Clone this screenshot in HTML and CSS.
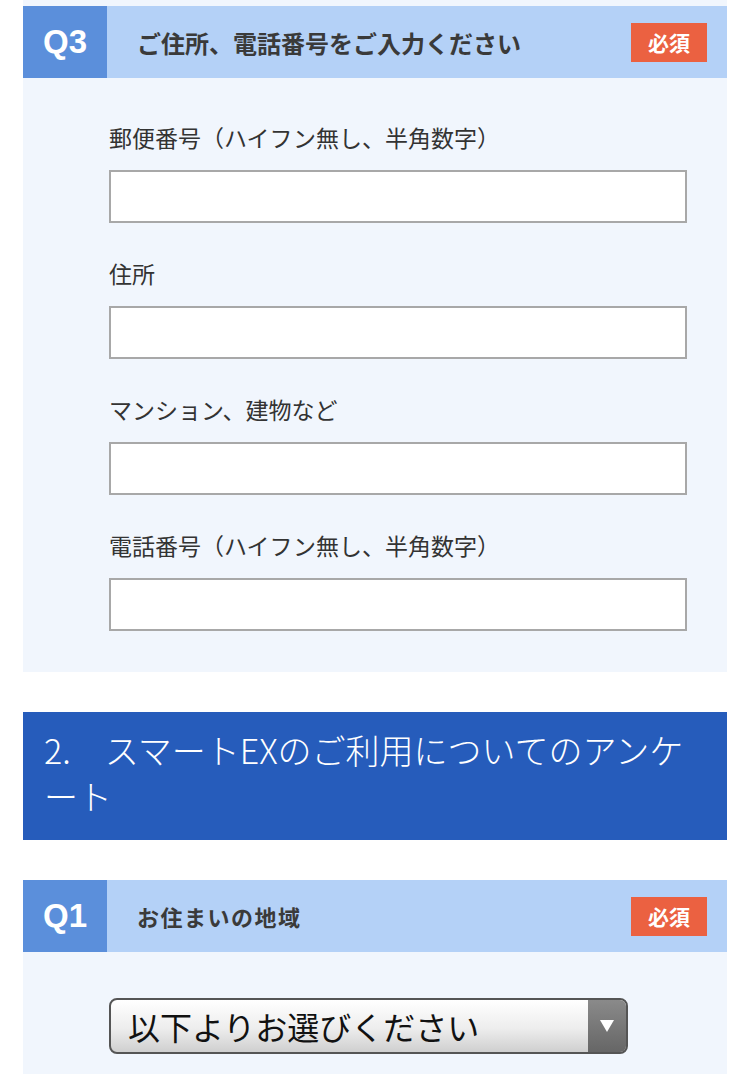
FILE: index.html
```html
<!DOCTYPE html>
<html lang="ja">
<head>
<meta charset="utf-8">
<link rel="stylesheet" href="styles.css">
</head>
<body>
<div class="page">
  <div class="prev-tail"></div>
  <section class="card">
    <div class="q-head">
      <div class="q-num">Q3</div>
      <div class="q-title">ご住所、電話番号をご入力ください</div>
      <div class="badge">必須</div>
    </div>
    <div class="q-body form">
      <label class="field">
        <span class="label">郵便番号（ハイフン無し、半角数字）</span>
        <input class="input" type="text">
      </label>
      <label class="field">
        <span class="label">住所</span>
        <input class="input" type="text">
      </label>
      <label class="field">
        <span class="label">マンション、建物など</span>
        <input class="input" type="text">
      </label>
      <label class="field">
        <span class="label">電話番号（ハイフン無し、半角数字）</span>
        <input class="input" type="text">
      </label>
    </div>
  </section>

  <h2 class="section-title">2.　スマートEXのご利用についてのアンケート</h2>

  <section class="card">
    <div class="q-head">
      <div class="q-num">Q1</div>
      <div class="q-title small">お住まいの地域</div>
      <div class="badge">必須</div>
    </div>
    <div class="q-body select-body">
      <div class="select">
        <span class="select-text">以下よりお選びください</span>
        <span class="select-arrow">
          <svg width="14" height="12" viewBox="0 0 14 12"><path d="M0 0H14L7 12Z" fill="#fff"/></svg>
        </span>
      </div>
    </div>
  </section>
</div>
</body>
</html>
```
FILE: styles.css
```css
* { box-sizing: border-box; }
html, body { margin: 0; padding: 0; background: #ffffff; }
body {
  font-family: "Noto Sans CJK JP", "Noto Sans", sans-serif;
  color: #333;
}
.page {
  padding: 0 23px;
}
.prev-tail {
  height: 6px;
  background: #f1f6fd;
}
.card {
  background: #f1f6fd;
}
.q-head {
  display: flex;
  align-items: center;
  height: 72px;
  background: #b4d1f7;
}
.q-num {
  align-self: stretch;
  width: 84px;
  background: #5b8fdb;
  color: #fff;
  display: flex;
  align-items: center;
  justify-content: center;
  font-family: "Liberation Sans", Arial, sans-serif;
  font-weight: bold;
  font-size: 33px;
}
.q-title {
  flex: 1;
  padding-left: 30px;
  font-size: 24px;
  font-weight: bold;
  color: #3a3a3a;
}
.q-title.small {
  font-size: 22px;
  letter-spacing: 1.5px;
}
.badge {
  margin-right: 20px;
  width: 76px;
  height: 39px;
  background: #eb6141;
  color: #fff;
  font-weight: bold;
  font-size: 21px;
  display: flex;
  align-items: center;
  justify-content: center;
}
.q-body.form {
  padding: 43px 40px 41px 86px;
  display: flex;
  flex-direction: column;
  gap: 34px;
}
.field {
  display: flex;
  flex-direction: column;
  gap: 16px;
}
.label {
  font-size: 23px;
  line-height: 33px;
  color: #333;
}
.input {
  display: block;
  width: 100%;
  height: 53px;
  margin: 0;
  border: 2px solid #a8a8a8;
  background: #fff;
  border-radius: 0;
  outline: none;
}
.section-title {
  margin: 40px 0 40px;
  padding: 15px 20px 21px 21px;
  background: #265cbb;
  color: #fff;
  font-weight: 300;
  font-size: 34px;
  line-height: 46px;
}
.select-body {
  padding: 46px 40px 30px 86px;
}
.select {
  display: flex;
  width: 519px;
  height: 56px;
  border: 2px solid #555;
  border-radius: 8px;
  overflow: hidden;
  background: linear-gradient(to bottom, #ffffff 0%, #ededed 55%, #cfcfcf 100%);
}
.select-text {
  flex: 1;
  padding-left: 17px;
  display: flex;
  align-items: center;
  font-size: 32px;
  color: #111;
}
.select-arrow {
  width: 38px;
  display: flex;
  align-items: center;
  justify-content: center;
  background: linear-gradient(to bottom, #8a8a8a 0%, #666 100%);
}
```
